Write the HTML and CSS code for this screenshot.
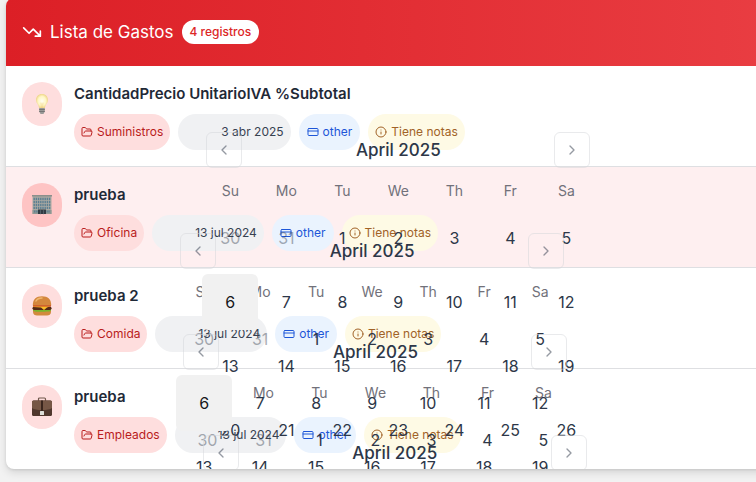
FILE: index.html
```html
<!DOCTYPE html>
<html lang="es">
<head>
<meta charset="utf-8">
<title>Lista de Gastos</title>
<link rel="stylesheet" href="styles.css">
</head>
<body>
<svg class="sprite" aria-hidden="true">
  <symbol id="folder" viewBox="0 0 24 24"><path d="m6 14 1.500-2.900A2 2 0 0 1 9.240 10H20a2 2 0 0 1 1.940 2.500l-1.540 6a2 2 0 0 1-1.950 1.500H4a2 2 0 0 1-2-2V5a2 2 0 0 1 2-2h3.900a2 2 0 0 1 1.690.900l.810 1.200a2 2 0 0 0 1.670.900H18a2 2 0 0 1 2 2v2"/></symbol>
  <symbol id="card" viewBox="0 0 24 24"><rect x="2" y="5" width="20" height="14" rx="2"/><path d="M2 10h20"/></symbol>
  <symbol id="info" viewBox="0 0 24 24"><circle cx="12" cy="12" r="10"/><path d="M12 16v-4M12 8h.01"/></symbol>
  <symbol id="left" viewBox="0 0 24 24"><path d="m15 18-6-6 6-6"/></symbol>
  <symbol id="right" viewBox="0 0 24 24"><path d="m9 18 6-6-6-6"/></symbol>
</svg>
<main class="panel">
  <header class="panel-header">
    <svg class="trend" viewBox="0 0 24 24" aria-hidden="true"><path d="m22 17-8.500-8.500-5 5L2 7M16 17h6v-6"/></svg>
    <h1>Lista de Gastos</h1>
    <span class="count">4 registros</span>
  </header>
  <ul class="expenses">
    <li class="expense">
      <span class="avatar"><svg viewBox="0 0 20 20" aria-hidden="true"><defs><radialGradient id="glow"><stop offset="0" stop-color="#fffef4"/><stop offset=".65" stop-color="#fff6c4"/><stop offset="1" stop-color="#efd78c"/></radialGradient></defs><path d="M10 0C6.200 0 4 2.700 4 6c0 3 2.600 4.400 3.100 8h5.800C13.400 10.400 16 9 16 6c0-3.300-2.200-6-6-6z" fill="url(#glow)"/><path d="M9 9l.500 5M11 9l-.500 5" stroke="#ecca7a" stroke-width=".5" fill="none"/><path d="M7.200 14h5.600v3.500L11.500 20h-3l-1.300-2.500z" fill="#9a9a98"/><path d="M7.500 15.500h5M7.500 17.500h5" stroke="#666" stroke-width=".7"/></svg></span>
      <div class="details"><h2>CantidadPrecio UnitarioIVA %Subtotal</h2>
        <div class="tags"><span class="tag category"><svg><use href="#folder"/></svg>Suministros</span><span class="tag date"><span class="anchor"></span>3 abr 2025</span><span class="tag method"><svg><use href="#card"/></svg>other</span><span class="tag note"><svg><use href="#info"/></svg>Tiene notas</span></div>
      </div>
    </li>
    <li class="expense active">
      <span class="avatar"><svg viewBox="0 0 20 20" aria-hidden="true"><path d="M.5 1h19v18H.5z" fill="#aaa9a2"/><path d="M0 0h20v1.500H0z" fill="#8b8f8c"/><path d="M1.500 3.800h17M1.500 6.800h17M1.500 9.800h17M1.500 12.800h17" stroke="#5d7f92" stroke-width="2.200" stroke-linecap="butt" stroke-dasharray="1.400 .8"/><path d="M.5 15h19v4H.5z" fill="#8e9793"/><path d="M2 16.500h16" stroke="#5d7f92" stroke-width="2" stroke-linecap="butt" stroke-dasharray="1.400 .8"/><path d="M6 14.500h8V19H6z" fill="#303b43"/><path d="M8.500 15.500V19M11.500 15.500V19" stroke="#71818a" stroke-width=".5"/></svg></span>
      <div class="details"><h2>prueba</h2>
        <div class="tags"><span class="tag category"><svg><use href="#folder"/></svg>Oficina</span><span class="tag date"><span class="anchor"></span>13 jul 2024</span><span class="tag method"><svg><use href="#card"/></svg>other</span><span class="tag note"><svg><use href="#info"/></svg>Tiene notas</span></div>
      </div>
    </li>
    <li class="expense">
      <span class="avatar"><svg viewBox="0 0 20 20" aria-hidden="true"><path d="M1 14h18v2c0 2.500-2 3.500-4 3.500H5c-2 0-4-1-4-3.500z" fill="#d18a3d"/><path d="M1 11.500c3-1 15-1 18 0v3c-2 2-3 .5-5 1-2 .6-4 0-6 .2-2 .3-5 .3-7-1.200z" fill="#77b52e"/><rect x=".5" y="10.500" width="19" height="3.500" rx="1.700" fill="#552a18"/><path d="M1 10h18l-4 1.500-3 2.500-3-2.500L1 11z" fill="#f9bd28"/><path d="M1 9h18v1.500H1z" fill="#c93d25"/><path d="M.8 9.500C.8 3 4 .3 10 .3S19.200 3 19.200 9.500z" fill="#d4873d"/><path d="M4 5c1-2 3-3 6-3" stroke="#eeb76d" stroke-width="1.500" fill="none"/></svg></span>
      <div class="details"><h2>prueba 2</h2>
        <div class="tags"><span class="tag category"><svg><use href="#folder"/></svg>Comida</span><span class="tag date"><span class="anchor"></span>13 jul 2024</span><span class="tag method"><svg><use href="#card"/></svg>other</span><span class="tag note"><svg><use href="#info"/></svg>Tiene notas</span></div>
      </div>
    </li>
    <li class="expense">
      <span class="avatar"><svg viewBox="0 0 20 20" aria-hidden="true"><path d="M6.500 4V2q0-1 1-1h5q1 0 1 1v2" fill="none" stroke="#71594d" stroke-width="1.200"/><rect y="3.500" width="20" height="15.500" rx="1.500" fill="#50372d"/><path d="M0 5q0-1.500 1.500-1.500h17Q20 3.500 20 5v6q-3 2-10 2T0 11z" fill="#765746"/><path d="M9 3.500h2V15H9z" fill="#3a251d"/><rect x="8" y="14" width="4" height="4" rx=".5" fill="#deded8"/></svg></span>
      <div class="details"><h2>prueba</h2>
        <div class="tags"><span class="tag category"><svg><use href="#folder"/></svg>Empleados</span><span class="tag date"><span class="anchor"></span>13 jul 2024</span><span class="tag method"><svg><use href="#card"/></svg>other</span><span class="tag note"><svg><use href="#info"/></svg>Tiene notas</span></div>
      </div>
    </li>
  </ul>
</main>
<template id="calendar">
  <div class="calendar">
    <div class="caption"><button class="nav" type="button" aria-label="Previous month"><svg><use href="#left"/></svg></button><span>April 2025</span><button class="nav" type="button" aria-label="Next month"><svg><use href="#right"/></svg></button></div>
    <table><thead><tr><th>Su</th><th>Mo</th><th>Tu</th><th>We</th><th>Th</th><th>Fr</th><th>Sa</th></tr></thead><tbody></tbody></table>
  </div>
</template>
<script src="calendar.js"></script>
</body>
</html>
```
FILE: styles.css
```css
* { box-sizing: border-box; }
body { margin: 0; min-height: 100vh; overflow: hidden; background: #f2f2f2; color: #1f2937; font: 16px/24px Inter, "Liberation Sans", sans-serif; }
h1, h2, ul { margin: 0; padding: 0; }
button { font: inherit; color: inherit; padding: 0; border: 0; background: none; }
svg { fill: none; stroke: currentColor; stroke-width: 2; stroke-linecap: round; stroke-linejoin: round; flex: none; }
.sprite { position: absolute; width: 0; height: 0; }
.panel { margin: -2px -16px 0 6px; overflow: hidden; border-radius: 8px; background: #fff; box-shadow: 0 4px 8px #0000001c, 0 1px 3px #0000001a; }
.panel-header { display: flex; align-items: center; gap: 8px; height: 68px; padding: 0 16px; color: #fff; background: linear-gradient(90deg, #dc1f26, #e93d42); }
.trend { width: 20px; height: 20px; }
h1 { font-size: 17px; line-height: 28px; font-weight: 400; }
.count { padding: 4px 8px; border-radius: 12px; background: #fff; color: #dc2626; font-size: 12px; line-height: 16px; font-weight: 500; }
.expenses { list-style: none; }
.expense { display: flex; align-items: flex-start; gap: 12px; padding: 16px; border-bottom: 1px solid #dedfe2; }
.expense:last-child { border: 0; }
.active { background: #feeff0; }
.avatar { display: flex; align-items: center; justify-content: center; width: 40px; height: 44px; border-radius: 20px; background: #fedede; }
.active .avatar { background: #fec4c4; }
.avatar svg { width: 20px; height: 20px; stroke: none; }
h2 { font-size: 15px; line-height: 24px; font-weight: 600; }
.tags { display: flex; gap: 8px; margin-top: 8px; }
.tag { display: flex; align-items: center; gap: 4px; height: 36px; padding: 0 7px; border-radius: 18px; font-size: 12px; line-height: 16px; white-space: nowrap; }
.tag > svg { width: 12px; height: 12px; }
.category { background: #fedede; color: #b91c1c; }
.date { background: #f0f1f3; color: #374151; gap: 12px; }
.method { padding: 0 8px; background: #eaf3fe; color: #1d56d8; }
.note { background: #fefae5; color: #a16227; }
.anchor { width: 24px; height: 24px; padding: 12px 0 0 17px; }
.calendar { width: 392px; font-size: 16px; line-height: 24px; color: #2d3748; }
.caption { position: relative; display: flex; align-items: center; justify-content: space-between; padding: 0 4px; font-size: 17px; font-weight: 500; }
.nav { display: flex; align-items: center; justify-content: center; width: 36px; height: 36px; border: 1px solid #d4d6da; border-radius: 6px; opacity: .5; }
.nav svg { width: 16px; height: 16px; }
table { width: 100%; margin-top: 12px; table-layout: fixed; border-collapse: collapse; }
th { height: 22px; padding: 0; color: #71717a; font-size: 14px; line-height: 20px; font-weight: 400; }
td { height: 64px; padding: 8px 0 0; }
.day { position: relative; display: block; width: 100%; height: 56px; border-radius: 6px; }
.outside { opacity: .4; }
.today { background: #f1f1f1; color: #18181b; }
```
FILE: calendar.js
```js
const template = document.getElementById('calendar');
document.querySelectorAll('.anchor').forEach(anchor => {
  const calendar = template.content.cloneNode(true);
  const body = calendar.querySelector('tbody');
  for (let week = 0; week < 5; week++) {
    const row = body.insertRow();
    for (let weekday = 0; weekday < 7; weekday++) {
      const date = new Date(2025, 2, 30 + week * 7 + weekday);
      const button = document.createElement('button');
      button.type = 'button';
      button.className = 'day';
      button.textContent = date.getDate();
      if (date.getMonth() !== 3) button.classList.add('outside');
      if (date.getMonth() === 3 && date.getDate() === 6) button.classList.add('today');
      row.insertCell().append(button);
    }
  }
  anchor.append(calendar);
});
```
